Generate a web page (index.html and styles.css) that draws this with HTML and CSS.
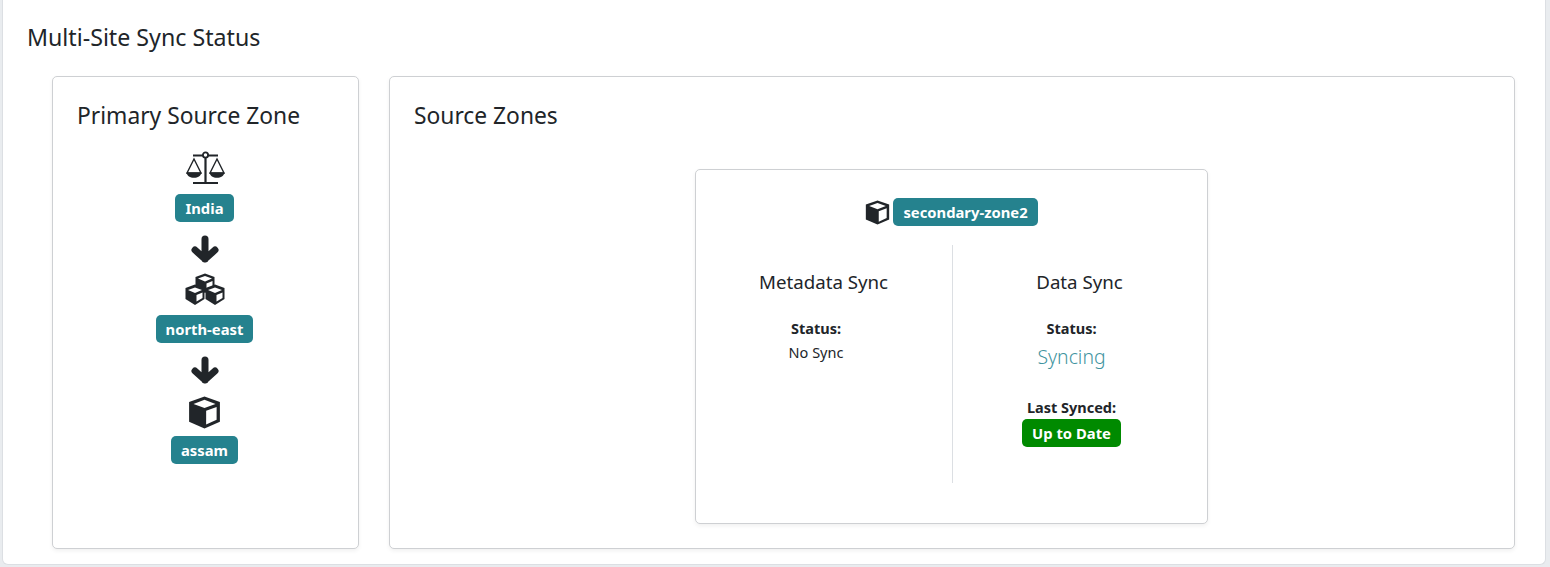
FILE: index.html
```html
<!DOCTYPE html>
<html lang="en">
<head>
<meta charset="utf-8">
<title>Multi-Site Sync Status</title>
<link rel="stylesheet" href="styles.css">
</head>
<body>
<main class="card-outer">
  <h3 class="page-title">Multi-Site Sync Status</h3>
  <div class="row">
    <section class="card primary">
      <h4 class="card-title">Primary Source Zone</h4>
      <div class="chain">
        <svg class="ico scale" width="40" height="36" viewBox="0 0 40 36"><path d="M8 5.500h25M20.500 5v27M8 33h25" class="line"/><circle cx="20.500" cy="5" r="2.600" fill="#fff" stroke="#212529" stroke-width="1.800"/><path d="M9 9 2 23h14zM32 9l-7 14h14z" class="thin"/><path d="M1.500 22.500h15c-.6 3.500-3.500 5.300-7.500 5.300s-6.900-1.800-7.500-5.300zM24.500 22.500h15c-.6 3.500-3.500 5.300-7.500 5.300s-6.900-1.800-7.500-5.300z" fill="#212529"/></svg>
        <span class="badge">India</span>
        <svg class="ico arrow" width="30" height="28" viewBox="0 0 30 28"><path d="M15 4v20M5 15l10 9 10-9" class="arr"/></svg>
        <svg class="ico cubes" width="40" height="33" viewBox="0 0 40 33"><path d="M20 .5l9.500 3.500v10l-9.500 6-9.500-6V4z" fill="#212529"/><path d="M20 3l7 2.500-7 3-7-3z" fill="#fff"/><path d="M21.500 10.500l6-2.500v5.500l-6 3.500z" fill="#fff"/><path d="M10 11.500l9.500 3.500v11l-9.500 6-9.500-6V15z" fill="#212529"/><path d="M10 14.500l7 2.500-7 3-7-3z" fill="#fff"/><path d="M11.500 22l6-2.500V25l-6 3.500z" fill="#fff"/><path d="M30 11.500l9.500 3.500v11l-9.500 6-9.500-6V15z" fill="#212529"/><path d="M30 14.500l7 2.500-7 3-7-3z" fill="#fff"/><path d="M31.500 22l6-2.500V25l-6 3.500z" fill="#fff"/></svg>
        <span class="badge">north-east</span>
        <svg class="ico arrow" width="30" height="28" viewBox="0 0 30 28"><path d="M15 4v20M5 15l10 9 10-9" class="arr"/></svg>
        <svg class="ico cube" width="33" height="33" viewBox="1 1 30 30"><path d="M16 1.500 30 6.500v18L16 30.500 2 24.500v-18z" fill="#212529"/><path d="M16 4.500 26 8.200 16 12 6 8.200z" fill="#fff"/><path d="M17.500 14.500 27 11v11.500l-9.500 4.500z" fill="#fff"/></svg>
        <span class="badge">assam</span>
      </div>
    </section>
    <section class="card sources">
      <h4 class="card-title">Source Zones</h4>
      <div class="zone-wrap">
        <div class="card zone">
          <div class="zone-head">
            <svg class="zone-ico" width="25" height="25" viewBox="1 1 30 30"><path d="M16 1.500 30 6.500v18L16 30.500 2 24.500v-18z" fill="#212529"/><path d="M16 4.500 26 8.200 16 12 6 8.200z" fill="#fff"/><path d="M17.500 14.500 27 11v11.500l-9.500 4.500z" fill="#fff"/></svg>
            <span class="badge">secondary-zone2</span>
          </div>
          <div class="zone-body">
            <div class="col left">
              <h5 class="sync-title">Metadata Sync</h5>
              <div class="stat">
                <b>Status:</b>
                <span>No Sync</span>
              </div>
            </div>
            <div class="col right">
              <h5 class="sync-title">Data Sync</h5>
              <div class="stat">
                <b>Status:</b>
                <span class="syncing">Syncing</span>
                <b class="last">Last Synced:</b>
                <span class="badge ok">Up to Date</span>
              </div>
            </div>
          </div>
        </div>
      </div>
    </section>
  </div>
</main>
</body>
</html>
```
FILE: styles.css
```css
* { box-sizing: border-box; }
html, body { margin: 0; height: 567px; overflow: hidden; }
body {
  background: #e9ecef;
  color: #212529;
  font-family: "Noto Sans", "Open Sans", sans-serif;
  font-size: 14.5px;
  padding: 0 4px 2px 2px;
}
.card-outer {
  height: 565px;
  background: #fff;
  border-radius: 0 0 6px 6px;
  border: 1px solid #dcdfe3;
  border-top: 0;
  padding: 23px 30px 16px 24px;
}
.page-title { margin: 0 0 25px; font-size: 23.200px; line-height: 28px; font-weight: 400; }
.row { display: flex; gap: 30px; padding-left: 25px; }
.card {
  background: #fff;
  border: 1px solid #ced0d3;
  border-radius: 5px;
  box-shadow: 0 2px 4px rgba(0,0,0,.06);
}
.primary { width: 307px; height: 473px; padding: 24px 24px; flex: none; }
.sources { flex: 1; height: 473px; padding: 24px 24px; }
.card-title { margin: 0; font-size: 22.800px; line-height: 30px; font-weight: 400; }
.chain { display: flex; flex-direction: column; align-items: center; margin-top: 19px; padding-right: 2px; }
.ico { display: block; }
.scale { margin-bottom: 8px; }
.cubes { margin: 10px 0 9px; }
.cube { margin: 12px 0 7px; }
.arrow { margin-top: 13px; }
.badge {
  display: inline-block;
  background: #25828e;
  color: #fff;
  font-weight: 700;
  font-size: 14.800px;
  line-height: 18px;
  padding: 5px 10px;
  border-radius: 5px;
  white-space: nowrap;
}
.line { fill: none; stroke: #212529; stroke-width: 2.200; }
.thin { fill: none; stroke: #212529; stroke-width: 1.400; }
.arr { fill: none; stroke: #212529; stroke-width: 7; stroke-linecap: round; stroke-linejoin: round; }
.zone-wrap { display: flex; justify-content: center; margin-top: 38px; padding-right: 2px; }
.zone { width: 513px; height: 355px; padding: 28px 0 0; }
.zone-head { display: flex; justify-content: center; align-items: center; gap: 3px; padding-left: 1px; }
.zone-body { display: flex; margin-top: 19px; height: 238px; }
.col { flex: 1; text-align: center; }
.left { flex: 0 0 257px; border-right: 1px solid #dcdfe3; }
.sync-title { margin: 25px 0 22px; font-size: 18.700px; line-height: 24px; font-weight: 400; }
.stat { display: flex; flex-direction: column; align-items: center; line-height: 24px; padding-right: 16px; }
.left .stat { padding-right: 15px; }
.syncing { color: #3f94a0; font-size: 19.400px; font-weight: 300; line-height: 30px; margin-top: 2px; }
.last { margin-top: 23px; line-height: 24px; }
.ok { background: #008a00; }
```
